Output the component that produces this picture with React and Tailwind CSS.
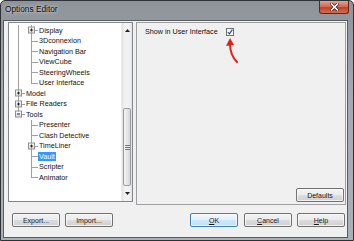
import React from "react";

const LINE = "bg-[#a0a0a0]";

function PlusBox({ minus }) {
  return (
    <div className="absolute left-[3px] top-1/2 -translate-y-1/2 w-[7px] h-[7px] border border-[#8e8f8f] bg-[linear-gradient(to_bottom,#ffffff,#d8d8d8)] z-10">
      <div className="absolute left-[1px] top-[2px] w-[3px] h-px bg-[#2b2b2b]" />
      {!minus && <div className="absolute left-[2px] top-[1px] w-px h-[3px] bg-[#2b2b2b]" />}
    </div>
  );
}

function Cell({ type, box }) {
  return (
    <div className="relative w-[13px] h-full shrink-0">
      {type === "vert" && <div className={`absolute left-[6px] top-0 bottom-0 w-px ${LINE}`} />}
      {type === "tee" && (
        <>
          <div className={`absolute left-[6px] top-0 bottom-0 w-px ${LINE}`} />
          <div className={`absolute left-[6px] top-1/2 w-[7px] h-px ${LINE}`} />
        </>
      )}
      {type === "elbow" && (
        <>
          <div className={`absolute left-[6px] top-0 h-1/2 w-px ${LINE}`} />
          <div className={`absolute left-[6px] top-1/2 w-[7px] h-px ${LINE}`} />
        </>
      )}
      {box && <PlusBox minus={box === "minus"} />}
    </div>
  );
}

const rows = [
  { c: ["vert", "tee"], box: [null, "plus"], t: "Display" },
  { c: ["vert", "tee"], box: [null, null], t: "3Dconnexion" },
  { c: ["vert", "tee"], box: [null, null], t: "Navigation Bar" },
  { c: ["vert", "tee"], box: [null, null], t: "ViewCube" },
  { c: ["vert", "tee"], box: [null, null], t: "SteeringWheels" },
  { c: ["vert", "elbow"], box: [null, null], t: "User Interface" },
  { c: ["tee"], box: ["plus"], t: "Model" },
  { c: ["tee"], box: ["plus"], t: "File Readers" },
  { c: ["elbow"], box: ["minus"], t: "Tools" },
  { c: ["none", "tee"], box: [null, null], t: "Presenter" },
  { c: ["none", "tee"], box: [null, null], t: "Clash Detective" },
  { c: ["none", "tee"], box: [null, "plus"], t: "TimeLiner" },
  { c: ["none", "tee"], box: [null, null], t: "Vault", sel: true },
  { c: ["none", "tee"], box: [null, null], t: "Scripter" },
  { c: ["none", "elbow"], box: [null, null], t: "Animator" },
];

function Btn({ children, w = "w-[48px]", def }) {
  return (
    <div
      className={`${w} h-[14px] rounded-[2px] border ${
        def
          ? "border-[#3c7fb1] bg-[linear-gradient(to_bottom,#eef7fd_0%,#e2f1fb_50%,#cfe7f8_50%,#bfdff5_100%)]"
          : "border-[#707070] bg-[linear-gradient(to_bottom,#f2f2f2_0%,#ebebeb_50%,#dddddd_50%,#cfcfcf_100%)]"
      } flex items-center justify-center text-[7px] leading-none text-[#1a1a1a] shadow-[inset_0_0_0_1px_rgba(255,255,255,0.7)]`}
    >
      {children}
    </div>
  );
}

function Tri({ down }) {
  return (
    <svg width="5" height="3" viewBox="0 0 5 3">
      {down ? <path d="M0 0 H5 L2.5 3 Z" fill="#222" /> : <path d="M0 3 H5 L2.5 0 Z" fill="#222" />}
    </svg>
  );
}

export default function App() {
  return (
    <div
      className="w-[354px] h-[241px] flex flex-col border border-[#2e3236] rounded-t-[5px] overflow-hidden bg-[linear-gradient(to_bottom,#8d9398_0%,#a4aab0_40%,#aab0b6_100%)]"
      style={{ fontFamily: '"Liberation Sans", Arial, sans-serif' }}
    >
      {/* title bar */}
      <div className="h-[19px] flex items-start justify-between shrink-0">
        <div className="pl-[4px] pt-[4px] text-[8.3px] leading-none text-[#111] [text-shadow:0_0_4px_rgba(255,255,255,0.9)]">
          Options Editor
        </div>
        <div className="mr-[4px] w-[30px] h-[13px] rounded-b-[3px] border border-t-0 border-[#5a2a22] bg-[linear-gradient(to_bottom,#e7a28f_0%,#d46a53_45%,#c2412a_55%,#d76a4d_100%)] flex items-center justify-center">
          <svg width="9" height="8" viewBox="0 0 9 8">
            <path d="M1.5 1 L7.5 7 M7.5 1 L1.5 7" stroke="#3b1b14" strokeWidth="3" strokeLinecap="square" />
            <path d="M1.5 1 L7.5 7 M7.5 1 L1.5 7" stroke="#ffffff" strokeWidth="1.6" strokeLinecap="square" />
          </svg>
        </div>
      </div>

      {/* content */}
      <div className="ml-[2px] w-[345px] h-[218px] border border-[#575d63] bg-[#f0f0f0] flex flex-col">
        <div className="flex items-start pt-[1px] pl-[4px]">
          {/* tree */}
          <div className="w-[125px] h-[180px] border border-[#828790] bg-white flex">
            <div className="flex-1 pt-[2px] pl-[3px] overflow-hidden">
              {rows.map((r, i) => (
                <div key={i} className="h-[10.5px] flex items-center">
                  {r.c.map((c, j) => (
                    <Cell key={j} type={c} box={r.box[j]} />
                  ))}
                  <span
                    className={`ml-[0px] px-[1px] text-[7.2px] leading-[9px] whitespace-nowrap ${
                      r.sel ? "bg-[#3399ff] text-white" : "text-[#111]"
                    }`}
                  >
                    {r.t}
                  </span>
                </div>
              ))}
            </div>
            {/* scrollbar */}
            <div className="w-[11px] flex flex-col bg-[linear-gradient(to_right,#e3e3e3,#f2f2f2_30%,#f2f2f2_70%,#e3e3e3)] border-l border-[#ececec]">
              <div className="h-[13px] flex items-center justify-center pt-[2px]">
                <Tri />
              </div>
              <div className="h-[72px]" />
              <div className="h-[78px] mx-[1px] rounded-[2px] border border-[#9a9a9a] bg-[linear-gradient(to_right,#f4f4f4,#e6e6e6_50%,#d8d8d8)] flex flex-col items-center justify-center gap-[1px]">
                <div className="w-[5px] h-px bg-[#7a7a7a]" />
                <div className="w-[5px] h-px bg-[#7a7a7a]" />
                <div className="w-[5px] h-px bg-[#7a7a7a]" />
              </div>
              <div className="flex-1 flex items-center justify-center">
                <Tri down />
              </div>
            </div>
          </div>

          {/* right panel */}
          <div className="relative ml-[3px] w-[210px] h-[183px] border border-[#a0a0a0] bg-[#f0f0f0] flex flex-col">
            <div className="flex items-center pl-[8px] pt-[5px]">
              <span className="text-[7.2px] leading-none text-[#111]">Show in User Interface</span>
              <div className="ml-[8px] w-[8px] h-[8px] border border-[#707070] bg-[linear-gradient(to_bottom,#f0f0f0,#ffffff)] flex items-center justify-center">
                <svg width="6" height="6" viewBox="0 0 6 6">
                  <path d="M0.8 3.2 L2.4 4.8 L5.4 0.6" stroke="#2a3d8f" strokeWidth="1.1" fill="none" />
                </svg>
              </div>
            </div>
            <svg className="absolute left-[88px] top-[13px]" width="14" height="28" viewBox="0 0 14 28">
              <path d="M5 2 L1 10 L9 9 Z" fill="#e3211c" />
              <path d="M5 8 C5 16 7 21 12 26" stroke="#e3211c" strokeWidth="2" fill="none" strokeLinecap="round" />
            </svg>
            <div className="flex-1" />
            <div className="flex justify-end pr-[1px] pb-[2px]">
              <Btn>Defaults</Btn>
            </div>
          </div>
        </div>

        {/* footer */}
        <div className="mt-[8px] flex items-center pl-[8px] pr-[2px]">
          <Btn>Export...</Btn>
          <div className="ml-[5px]">
            <Btn>Import...</Btn>
          </div>
          <div className="flex-1" />
          <Btn def>
            <span className="underline underline-offset-1">O</span>K
          </Btn>
          <div className="ml-[6px]">
            <Btn>
              <span className="underline underline-offset-1">C</span>ancel
            </Btn>
          </div>
          <div className="ml-[5px]">
            <Btn>
              <span className="underline underline-offset-1">H</span>elp
            </Btn>
          </div>
        </div>
      </div>
    </div>
  );
}
